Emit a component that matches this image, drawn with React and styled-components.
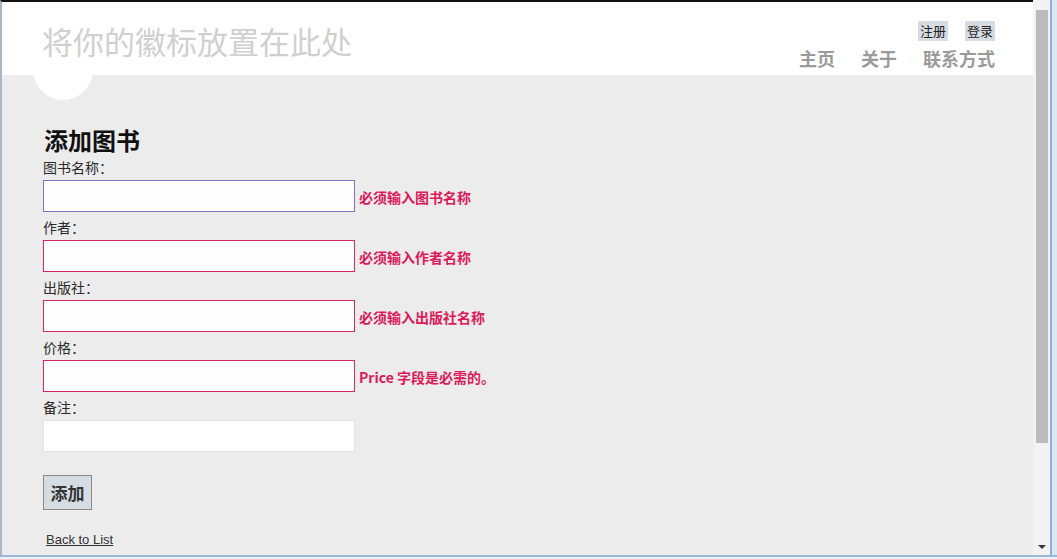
import React from "react";
import styled, { createGlobalStyle } from "styled-components";

const GlobalStyles = createGlobalStyle`
  html, body {
    margin: 0;
    padding: 0;
    overflow: hidden;
    background: #ececec;
  }
  * {
    box-sizing: border-box;
  }
`;

const cjk = `"Noto Sans CJK SC", "Noto Sans", sans-serif`;

const Window = styled.div`
  width: 1057px;
  height: 559px;
  display: flex;
  flex-direction: column;
`;

const WindowBody = styled.div`
  flex: 1;
  display: flex;
  min-height: 0;
`;

const Viewport = styled.div`
  flex: 1;
  display: flex;
  flex-direction: column;
  background: #ececec;
  border-top: 2px solid #111;
  border-left: 2px solid #aab6c4;
  min-width: 0;
`;

const Scrollbar = styled.div`
  width: 17px;
  background: #f3f3f3;
  display: flex;
  flex-direction: column;
  align-items: center;
  padding: 8px 0 6px;
  border-top: 2px solid #f3f3f3;
`;

const Thumb = styled.div`
  width: 12px;
  height: 433px;
  background: #bcbcbc;
`;

const ArrowDown = styled.div`
  margin-top: auto;
  width: 0;
  height: 0;
  border-left: 4px solid transparent;
  border-right: 4px solid transparent;
  border-top: 4px solid #333;
`;

const WindowEdge = styled.div`
  width: 7px;
  background: #dce7f3;
  border-left: 2px solid #8fb0d6;
`;

const BottomEdge = styled.div`
  height: 4px;
  background: #f0f0f0;
  border-top: 2px solid #9ab8da;
`;

const Header = styled.header`
  position: relative;
  height: 73px;
  background: #fff;
  display: flex;
  justify-content: space-between;
  padding: 19px 38px 0 40px;
`;

const Logo = styled.div`
  font-family: ${cjk};
  font-size: 31px;
  line-height: 40px;
  color: #d0d0d0;
  position: relative;
  z-index: 1;
`;

const LogoDot = styled.div`
  position: absolute;
  left: 31px;
  top: 38px;
  width: 60px;
  height: 60px;
  border-radius: 50%;
  background: #fff;
`;

const HeaderRight = styled.div`
  display: flex;
  flex-direction: column;
  align-items: flex-end;
  gap: 5px;
`;

const AccountBar = styled.div`
  display: flex;
  gap: 17px;
`;

const AccountButton = styled.a`
  font-family: ${cjk};
  font-size: 13px;
  line-height: 20px;
  padding: 0 2px;
  background: #d6dce2;
  color: #222;
  text-decoration: none;
`;

const Nav = styled.nav`
  display: flex;
  gap: 26px;
`;

const NavLink = styled.a`
  font-family: ${cjk};
  font-size: 18px;
  font-weight: 700;
  line-height: 24px;
  color: #9a9a9a;
  text-decoration: none;
`;

const Main = styled.main`
  padding: 51px 0 0 41px;
  display: flex;
  flex-direction: column;
  align-items: flex-start;
`;

const Title = styled.h2`
  font-family: ${cjk};
  font-size: 24px;
  font-weight: 700;
  line-height: 28px;
  color: #111;
  margin: 0 0 3px 1px;
`;

const Form = styled.form`
  display: flex;
  flex-direction: column;
  gap: 5px;
`;

const Field = styled.div`
  display: flex;
  flex-direction: column;
  gap: 3px;
`;

const Label = styled.label`
  font-family: ${cjk};
  font-size: 14px;
  line-height: 20px;
  color: #2a2a2a;
`;

const InputRow = styled.div`
  display: flex;
  align-items: center;
  gap: 4px;
`;

const borders = {
  focus: "#7d72c4",
  error: "#d42a5e",
  plain: "#e4e4e4",
};

const TextInput = styled.input`
  width: 312px;
  height: 32px;
  border: 1px solid ${(p) => borders[p.$state]};
  background: ${(p) => (p.$state === "plain" ? "#fff" : "#fefeff")};
  outline: none;
  font-size: 14px;
  padding: 0 6px;
`;

const ErrorText = styled.span`
  font-family: ${cjk};
  font-size: 14px;
  font-weight: 700;
  color: #dc1a5a;
  line-height: 20px;
  margin-top: 1px;
`;

const SubmitButton = styled.button`
  margin-top: 23px;
  width: 49px;
  height: 35px;
  font-family: ${cjk};
  font-size: 17px;
  font-weight: 700;
  color: #333;
  background: #d5dce2;
  border: 1px solid #8a8a8a;
  padding: 0;
`;

const BackLink = styled.a`
  margin: 21px 0 0 3px;
  font-family: "Liberation Sans", Arial, sans-serif;
  font-size: 13px;
  line-height: 18px;
  color: #333;
  text-decoration: underline;
`;

const fields = [
  { label: "图书名称：", state: "focus", error: "必须输入图书名称" },
  { label: "作者：", state: "error", error: "必须输入作者名称" },
  { label: "出版社：", state: "error", error: "必须输入出版社名称" },
  { label: "价格：", state: "error", error: "Price 字段是必需的。" },
  { label: "备注：", state: "plain" },
];

export default function App() {
  return (
    <Window>
      <GlobalStyles />
      <WindowBody>
        <Viewport>
          <Header>
            <LogoDot />
            <Logo>将你的徽标放置在此处</Logo>
            <HeaderRight>
              <AccountBar>
                <AccountButton href="#">注册</AccountButton>
                <AccountButton href="#">登录</AccountButton>
              </AccountBar>
              <Nav>
                <NavLink href="#">主页</NavLink>
                <NavLink href="#">关于</NavLink>
                <NavLink href="#">联系方式</NavLink>
              </Nav>
            </HeaderRight>
          </Header>
          <Main>
            <Title>添加图书</Title>
            <Form onSubmit={(e) => e.preventDefault()}>
              {fields.map((f) => (
                <Field key={f.label}>
                  <Label>{f.label}</Label>
                  <InputRow>
                    <TextInput $state={f.state} />
                    {f.error && <ErrorText>{f.error}</ErrorText>}
                  </InputRow>
                </Field>
              ))}
            </Form>
            <SubmitButton type="submit">添加</SubmitButton>
            <BackLink href="#">Back to List</BackLink>
          </Main>
        </Viewport>
        <Scrollbar>
          <Thumb />
          <ArrowDown />
        </Scrollbar>
        <WindowEdge />
      </WindowBody>
      <BottomEdge />
    </Window>
  );
}
